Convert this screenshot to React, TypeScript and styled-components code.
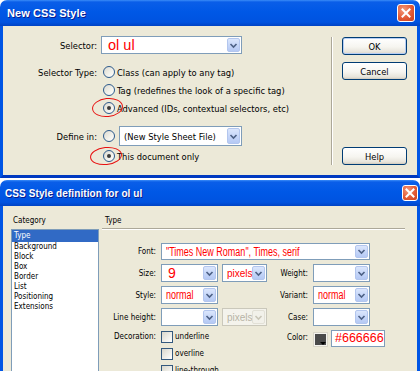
import React from "react";
import styled, { createGlobalStyle } from "styled-components";

const UI_FONT = `"DejaVu Sans Condensed", "DejaVu Sans", "Liberation Sans", sans-serif`;
const ARIAL = `"Liberation Sans", Arial, sans-serif`;

const GlobalStyle = createGlobalStyle`
  html, body { margin: 0; padding: 0; background: #ffffff; }
  body { font-family: ${UI_FONT}; color: #000000; }
  * { box-sizing: border-box; }
`;

const Screen = styled.div`
  width: 420px;
  height: 371px;
  overflow: hidden;
  display: flex;
  flex-direction: column;
  gap: 2px;
`;

const Window = styled.div<{ $height: number }>`
  height: ${(p) => p.$height}px;
  flex-shrink: 0;
  display: flex;
  flex-direction: column;
`;

const TitleBar = styled.div<{ $height: number; $padLeft: number; $padRight: number }>`
  height: ${(p) => p.$height}px;
  flex-shrink: 0;
  border-radius: 7px 7px 0 0;
  background: linear-gradient(
    180deg,
    #3b8cf7 0px,
    #0a5ee8 2px,
    #0058e6 45%,
    #0053e0 85%,
    #0043c4 100%
  );
  display: flex;
  align-items: center;
  justify-content: space-between;
  padding: 0 ${(p) => p.$padRight}px 0 ${(p) => p.$padLeft}px;
`;

const TitleText = styled.span<{ $size: number }>`
  font-family: ${ARIAL};
  font-weight: bold;
  font-size: ${(p) => p.$size}px;
  color: #ffffff;
  text-shadow: 1px 1px 0 #0a1c8c;
  letter-spacing: 0.1px;
`;

const CloseButton = styled.div<{ $w: number; $h: number }>`
  width: ${(p) => p.$w}px;
  height: ${(p) => p.$h}px;
  border: 1px solid #ffffff;
  border-radius: 3px;
  background: radial-gradient(circle at 35% 30%, #f29a7c 0%, #e35a35 55%, #c8401f 100%);
  display: flex;
  align-items: center;
  justify-content: center;
`;

const Frame = styled.div`
  flex: 1;
  min-height: 0;
  background: #ece9d8;
  border: 3px solid #0055e5;
  border-top: 0;
  border-bottom-color: #0039c0;
  display: flex;
`;

/* ---------- top dialog ---------- */

const FormArea = styled.div`
  width: 328px;
  padding-top: 10px;
  display: flex;
  flex-direction: column;
`;

const FormRow = styled.div<{ $h: number; $mt?: number }>`
  height: ${(p) => p.$h}px;
  margin-top: ${(p) => p.$mt ?? 0}px;
  display: grid;
  grid-template-columns: 94px 1fr;
  column-gap: 4px;
  align-items: center;
`;

const RowLabel = styled.span`
  text-align: right;
  font-size: 9.3px;
  white-space: nowrap;
`;

const OptionLine = styled.div`
  display: flex;
  align-items: center;
  gap: 2px;
  padding-left: 2px;
  font-size: 9.3px;
  white-space: nowrap;
`;

const RadioWrap = styled.span`
  position: relative;
  width: 12px;
  height: 12px;
  flex-shrink: 0;
`;

const Radio = styled.span<{ $checked?: boolean }>`
  display: flex;
  align-items: center;
  justify-content: center;
  width: 12px;
  height: 12px;
  border-radius: 50%;
  border: 1px solid #2c5a8c;
  background: linear-gradient(135deg, #dcdad0 0%, #f3f2ec 60%, #ffffff 100%);
  &::after {
    content: "";
    width: 4px;
    height: 4px;
    border-radius: 50%;
    background: ${(p) => (p.$checked ? "#3b3b3b" : "transparent")};
  }
`;

const Annotation = styled.span<{ $left: number; $top: number; $w: number; $h: number }>`
  position: absolute;
  left: ${(p) => p.$left}px;
  top: ${(p) => p.$top}px;
  width: ${(p) => p.$w}px;
  height: ${(p) => p.$h}px;
  border: 1px solid #e81010;
  border-radius: 50%;
  transform: rotate(-6deg);
  pointer-events: none;
`;

const SelectRow = styled.div`
  display: flex;
  align-items: center;
  gap: 4px;
  padding-left: 2px;
`;

const Combo = styled.div<{ $w: number; $h: number; $disabled?: boolean }>`
  width: ${(p) => p.$w}px;
  height: ${(p) => p.$h}px;
  flex-shrink: 0;
  border: 1px solid ${(p) => (p.$disabled ? "#cac8bb" : "#7f9db9")};
  background: ${(p) => (p.$disabled ? "#f4f3ec" : "#ffffff")};
  display: flex;
  align-items: center;
  padding: 1px;
`;

const ComboValue = styled.span<{ $pad?: number }>`
  flex: 1;
  min-width: 0;
  overflow: hidden;
  white-space: nowrap;
  padding-left: ${(p) => p.$pad ?? 3}px;
  font-size: 9.3px;
`;

const RedText = styled.span<{ $size: number; $narrow?: boolean; $gray?: boolean }>`
  display: inline-block;
  font-family: ${ARIAL};
  font-size: ${(p) => p.$size}px;
  color: ${(p) => (p.$gray ? "#b7b4a6" : "#ff0000")};
  line-height: 1;
  transform: ${(p) => (p.$narrow ? "scaleX(0.75)" : "none")};
  transform-origin: left center;
`;

const DropButton = styled.span<{ $disabled?: boolean }>`
  width: 13px;
  align-self: stretch;
  flex-shrink: 0;
  border-radius: 2px;
  border: 1px solid ${(p) => (p.$disabled ? "#e2e0d6" : "#b3c6ee")};
  background: ${(p) =>
    p.$disabled ? "#f2f1ea" : "linear-gradient(180deg, #dbe6fc 0%, #c3d4f8 60%, #b5c9f4 100%)"};
  display: flex;
  align-items: center;
  justify-content: center;
`;

const Separator = styled.div`
  width: 2px;
  margin: 11px 0 10px;
  border-left: 1px solid #aca899;
  border-right: 1px solid #ffffff;
`;

const ButtonColumn = styled.div`
  flex: 1;
  padding: 11px 10px 10px 9px;
  display: flex;
  flex-direction: column;
`;

const PushButton = styled.div<{ $focused?: boolean; $mt?: number | "auto" }>`
  width: 65px;
  height: 18px;
  margin-top: ${(p) => (p.$mt === "auto" ? "auto" : `${p.$mt ?? 0}px`)};
  border: 1px solid #003c74;
  border-radius: 3px;
  background: linear-gradient(180deg, #ffffff 0%, #f6f5f0 55%, #e8e5dc 85%, #d8d2c6 100%);
  box-shadow: ${(p) => (p.$focused ? "inset 0 0 0 1px #b6cdf4" : "inset 0 -1px 0 #d6d0c4")};
  display: flex;
  align-items: center;
  justify-content: center;
  font-size: 9.3px;
`;

/* ---------- bottom dialog ---------- */

const CategoryColumn = styled.div`
  width: 88px;
  margin-left: 8px;
  display: flex;
  flex-direction: column;
`;

const Caption = styled.div<{ $pad: number }>`
  height: 23px;
  padding: 10px 0 0 ${(p) => p.$pad}px;
  font-size: 8px;
  line-height: 10px;
`;

const CategoryList = styled.div`
  flex: 1;
  background: #ffffff;
  border: 1px solid #7f9db9;
  border-bottom: 0;
`;

const CategoryItem = styled.div<{ $selected?: boolean }>`
  height: ${(p) => (p.$selected ? 12 : 10)}px;
  line-height: ${(p) => (p.$selected ? 12 : 10)}px;
  padding-left: 2px;
  font-size: 8px;
  background: ${(p) => (p.$selected ? "#316ac5" : "transparent")};
  color: ${(p) => (p.$selected ? "#ffffff" : "#000000")};
`;

const TypePanel = styled.div`
  width: 303px;
  margin-left: 3px;
  display: flex;
  flex-direction: column;
`;

const PanelHeader = styled.div`
  height: 24px;
  border-bottom: 1px solid #ffffff;
  box-shadow: inset 0 -1px 0 #aca899;
  padding: 10px 0 0 3px;
  font-size: 8px;
  line-height: 10px;
`;

const FieldGrid = styled.div`
  margin-top: 13px;
  display: grid;
  grid-template-columns: 59px 106px 46px 1fr;
  grid-template-rows: 17px 18px 18px 18px 13px 13px 13px;
  row-gap: 4px;
  grid-template-areas:
    "fontL font font font"
    "sizeL size weightL weight"
    "styleL style variantL variant"
    "lhL lh caseL case"
    "decoL deco1 colorL color"
    ". deco2 . ."
    ". deco3 . .";
`;

const FieldLabel = styled.span<{ $area: string }>`
  grid-area: ${(p) => p.$area};
  align-self: center;
  text-align: right;
  padding-right: 5px;
  font-size: 8px;
  white-space: nowrap;
`;

const FieldCell = styled.div<{ $area: string }>`
  grid-area: ${(p) => p.$area};
  display: flex;
  align-items: center;
  gap: 4px;
`;

const CheckLine = styled.label`
  display: flex;
  align-items: center;
  gap: 2px;
  font-size: 8px;
  line-height: 10px;
  white-space: nowrap;
`;

const CheckBox = styled.span`
  width: 12px;
  height: 12px;
  flex-shrink: 0;
  border: 1px solid #34597e;
  background: linear-gradient(135deg, #d9d7cc 0%, #efeee8 55%, #ffffff 100%);
`;

const ColorCell = styled.div`
  grid-area: color;
  align-self: start;
  display: flex;
  align-items: flex-start;
  gap: 3px;
`;

const Swatch = styled.span`
  position: relative;
  width: 15px;
  height: 15px;
  margin-top: 2px;
  border: 1px solid #d8d5c8;
  background: #f4f3ee;
  padding: 1px;
  display: flex;
  &::before {
    content: "";
    flex: 1;
    background: #4a4a4a;
  }
  &::after {
    content: "";
    position: absolute;
    right: 1px;
    bottom: 1px;
    border-left: 3px solid transparent;
    border-right: 3px solid transparent;
    border-top: 3px solid #000000;
  }
`;

const ColorInput = styled.div`
  width: 54px;
  height: 17px;
  border: 1px solid #7f9db9;
  background: #ffffff;
  padding-left: 3px;
  display: flex;
  align-items: center;
`;

const ColorLabel = styled(FieldLabel)`
  align-self: start;
  padding-top: 3px;
`;

const Chevron: React.FC<{ disabled?: boolean }> = ({ disabled }) => (
  <svg width="9" height="7" viewBox="0 0 9 7">
    <polyline
      points="1.5,2 4.5,5 7.5,2"
      fill="none"
      stroke={disabled ? "#c9c6b8" : "#4d6185"}
      strokeWidth="1.6"
    />
  </svg>
);

const CloseGlyph: React.FC = () => (
  <svg width="10" height="10" viewBox="0 0 10 10">
    <path d="M1.5 1.5 L8.5 8.5 M8.5 1.5 L1.5 8.5" stroke="#ffffff" strokeWidth="2" strokeLinecap="square" />
  </svg>
);

interface DropdownProps {
  w: number;
  h: number;
  disabled?: boolean;
  children?: React.ReactNode;
  pad?: number;
}

const Dropdown: React.FC<DropdownProps> = ({ w, h, disabled, children, pad }) => (
  <Combo $w={w} $h={h} $disabled={disabled}>
    <ComboValue $pad={pad}>{children}</ComboValue>
    <DropButton $disabled={disabled}>
      <Chevron disabled={disabled} />
    </DropButton>
  </Combo>
);

const categories = [
  "Type",
  "Background",
  "Block",
  "Box",
  "Border",
  "List",
  "Positioning",
  "Extensions",
];

const NewStyleDialog: React.FC = () => (
  <Window $height={178}>
    <TitleBar $height={26} $padLeft={7} $padRight={5}>
      <TitleText $size={11}>New CSS Style</TitleText>
      <CloseButton $w={18} $h={18}>
        <CloseGlyph />
      </CloseButton>
    </TitleBar>
    <Frame>
      <FormArea>
        <FormRow $h={18}>
          <RowLabel>Selector:</RowLabel>
          <Dropdown w={141} h={18} pad={5}>
            <RedText $size={14.5}>ol ul</RedText>
          </Dropdown>
        </FormRow>
        <FormRow $h={18} $mt={9}>
          <RowLabel>Selector Type:</RowLabel>
          <OptionLine>
            <RadioWrap><Radio /></RadioWrap>
            Class (can apply to any tag)
          </OptionLine>
        </FormRow>
        <FormRow $h={18}>
          <span />
          <OptionLine>
            <RadioWrap><Radio /></RadioWrap>
            Tag (redefines the look of a specific tag)
          </OptionLine>
        </FormRow>
        <FormRow $h={18}>
          <span />
          <OptionLine>
            <RadioWrap>
              <Radio $checked />
              <Annotation $left={-11} $top={-4} $w={31} $h={19} />
            </RadioWrap>
            Advanced (IDs, contextual selectors, etc)
          </OptionLine>
        </FormRow>
        <FormRow $h={20} $mt={9}>
          <RowLabel>Define in:</RowLabel>
          <SelectRow>
            <RadioWrap><Radio /></RadioWrap>
            <Dropdown w={123} h={20}>
              (New Style Sheet File)
            </Dropdown>
          </SelectRow>
        </FormRow>
        <FormRow $h={18} $mt={1}>
          <span />
          <OptionLine>
            <RadioWrap>
              <Radio $checked />
              <Annotation $left={-13} $top={-3} $w={32} $h={18} />
            </RadioWrap>
            This document only
          </OptionLine>
        </FormRow>
      </FormArea>
      <Separator />
      <ButtonColumn>
        <PushButton $focused>OK</PushButton>
        <PushButton $mt={7}>Cancel</PushButton>
        <PushButton $mt="auto">Help</PushButton>
      </ButtonColumn>
    </Frame>
  </Window>
);

const DefinitionDialog: React.FC = () => (
  <Window $height={200}>
    <TitleBar $height={26} $padLeft={5} $padRight={2}>
      <TitleText $size={10}>CSS Style definition for ol ul</TitleText>
      <CloseButton $w={16} $h={16}>
        <CloseGlyph />
      </CloseButton>
    </TitleBar>
    <Frame>
      <CategoryColumn>
        <Caption $pad={2}>Category</Caption>
        <CategoryList>
          {categories.map((c, i) => (
            <CategoryItem key={c} $selected={i === 0}>
              {c}
            </CategoryItem>
          ))}
        </CategoryList>
      </CategoryColumn>
      <TypePanel>
        <PanelHeader>Type</PanelHeader>
        <FieldGrid>
          <FieldLabel $area="fontL">Font:</FieldLabel>
          <FieldCell $area="font">
            <Dropdown w={209} h={17}>
              <RedText $size={12} $narrow>"Times New Roman", Times, serif</RedText>
            </Dropdown>
          </FieldCell>

          <FieldLabel $area="sizeL">Size:</FieldLabel>
          <FieldCell $area="size">
            <Dropdown w={57} h={18} pad={5}>
              <RedText $size={14}>9</RedText>
            </Dropdown>
            <Dropdown w={45} h={18}>
              <RedText $size={10}>pixels</RedText>
            </Dropdown>
          </FieldCell>
          <FieldLabel $area="weightL">Weight:</FieldLabel>
          <FieldCell $area="weight">
            <Dropdown w={57} h={18} />
          </FieldCell>

          <FieldLabel $area="styleL">Style:</FieldLabel>
          <FieldCell $area="style">
            <Dropdown w={57} h={18}>
              <RedText $size={12} $narrow>normal</RedText>
            </Dropdown>
          </FieldCell>
          <FieldLabel $area="variantL">Variant:</FieldLabel>
          <FieldCell $area="variant">
            <Dropdown w={57} h={18}>
              <RedText $size={12} $narrow>normal</RedText>
            </Dropdown>
          </FieldCell>

          <FieldLabel $area="lhL">Line height:</FieldLabel>
          <FieldCell $area="lh">
            <Dropdown w={57} h={18} />
            <Dropdown w={45} h={18} disabled>
              <RedText $size={10} $gray>pixels</RedText>
            </Dropdown>
          </FieldCell>
          <FieldLabel $area="caseL">Case:</FieldLabel>
          <FieldCell $area="case">
            <Dropdown w={57} h={18} />
          </FieldCell>

          <FieldLabel $area="decoL">Decoration:</FieldLabel>
          <FieldCell $area="deco1">
            <CheckLine><CheckBox />underline</CheckLine>
          </FieldCell>
          <FieldCell $area="deco2">
            <CheckLine><CheckBox />overline</CheckLine>
          </FieldCell>
          <FieldCell $area="deco3">
            <CheckLine><CheckBox />line-through</CheckLine>
          </FieldCell>

          <ColorLabel $area="colorL">Color:</ColorLabel>
          <ColorCell>
            <Swatch />
            <ColorInput>
              <RedText $size={12.5}>#666666</RedText>
            </ColorInput>
          </ColorCell>
        </FieldGrid>
      </TypePanel>
    </Frame>
  </Window>
);

const App: React.FC = () => (
  <>
    <GlobalStyle />
    <Screen>
      <NewStyleDialog />
      <DefinitionDialog />
    </Screen>
  </>
);

export default App;
